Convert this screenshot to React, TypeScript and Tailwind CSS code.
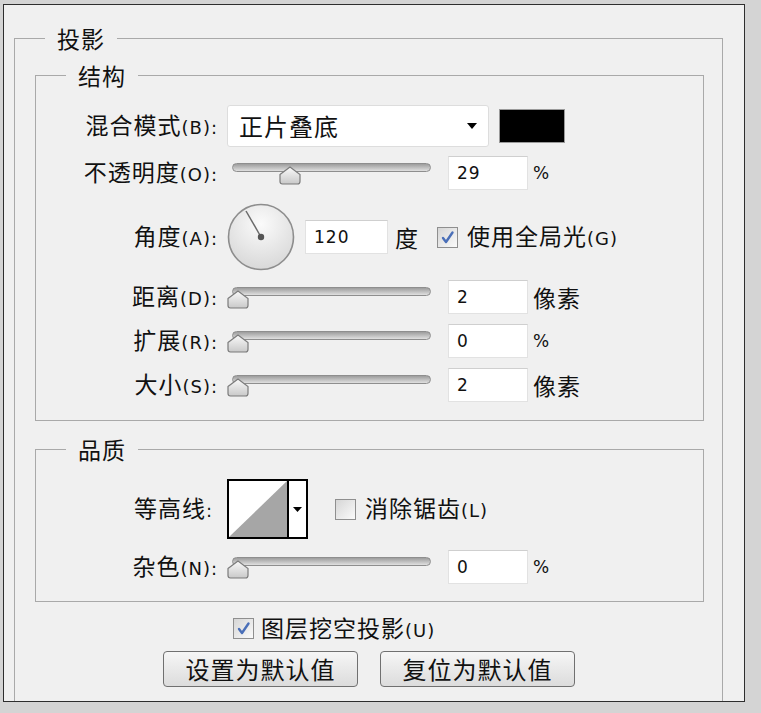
import React from 'react';

const latin = "font-['DejaVu_Sans',sans-serif] text-[18px] tracking-[1px]";
const num = "font-['DejaVu_Sans',sans-serif] text-[17px]";

function Lbl({ zh, key2, w = 'w-[182px]' }: { zh: string; key2?: string; w?: string }) {
  return (
    <div className={`${w} shrink-0 text-right whitespace-nowrap`}>
      {zh}
      {key2 && <span className={latin}>{key2}</span>}
      <span className={latin}>:</span>
    </div>
  );
}

function NumBox({ value, w = 'w-[80px]' }: { value: string; w?: string }) {
  return (
    <div className={`${w} h-[34px] shrink-0 bg-white border border-[#e2e2e2] border-t-[#cfcfcf] flex items-center pl-[8px] ${num}`}>
      {value}
    </div>
  );
}

function Thumb() {
  return (
    <svg width="22" height="19" viewBox="0 0 22 19">
      <defs>
        <linearGradient id="tg" x1="0" y1="0" x2="0" y2="1">
          <stop offset="0" stopColor="#fafafa" />
          <stop offset="1" stopColor="#c9c9c9" />
        </linearGradient>
      </defs>
      <path d="M1 8.5 L11 1 L21 8.5 V15.5 Q21 18 18.5 18 H3.5 Q1 18 1 15.5 Z" fill="url(#tg)" stroke="#7b7b7b" strokeWidth="1.2" />
    </svg>
  );
}

function Slider({ pos }: { pos: number }) {
  return (
    <div className="relative w-[205px] h-[34px] shrink-0">
      <div className="absolute left-[5px] top-[7px] w-[199px] h-[9px] rounded-full border border-[#8e8e8e] bg-linear-to-b from-[#9d9d9d] to-[#e0e0e0]" />
      <div className="absolute top-[10px]" style={{ left: pos }}>
        <Thumb />
      </div>
    </div>
  );
}

function Check({ on }: { on: boolean }) {
  return (
    <div className="w-[21px] h-[21px] shrink-0 border border-[#8f8f8f] bg-linear-to-br from-[#d6d6d6] to-[#fbfbfb] flex items-center justify-center">
      {on && (
        <svg width="15" height="15" viewBox="0 0 15 15">
          <path d="M3 8 L6 12 L12.5 2.5" fill="none" stroke="#4a6fb8" strokeWidth="2.4" strokeLinecap="round" strokeLinejoin="round" />
        </svg>
      )}
    </div>
  );
}

function Dial() {
  return (
    <svg width="68" height="68" viewBox="0 0 68 68" className="shrink-0">
      <defs>
        <radialGradient id="dg" cx="0.5" cy="0.3" r="0.75">
          <stop offset="0" stopColor="#fbfbfb" />
          <stop offset="1" stopColor="#d6d6d6" />
        </radialGradient>
      </defs>
      <circle cx="34" cy="34" r="32.5" fill="url(#dg)" stroke="#8d8d8d" strokeWidth="1.6" />
      <line x1="34" y1="34" x2="19" y2="8" stroke="#6a6a6a" strokeWidth="1.5" />
      <circle cx="34" cy="34" r="3.2" fill="#555" />
    </svg>
  );
}

function Contour() {
  return (
    <div className="w-[81px] h-[60px] shrink-0 border-2 border-black flex bg-white">
      <svg width="58" height="56" viewBox="0 0 58 56">
        <polygon points="0,56 58,0 58,56" fill="#a6a6a6" />
      </svg>
      <div className="flex-1 border-l-2 border-black flex items-center justify-center">
        <svg width="9" height="5" viewBox="0 0 9 5">
          <polygon points="0,0 9,0 4.5,5" fill="#000" />
        </svg>
      </div>
    </div>
  );
}

function Unit({ t, latinText }: { t: string; latinText?: boolean }) {
  return <div className={`ml-[5px] ${latinText ? num : ''}`}>{t}</div>;
}

export default function App() {
  return (
    <div className="w-[761px] h-[713px] bg-[#d4d4d4] pt-[4px] pl-[3px] text-[23px] leading-[24px] tracking-[1px] text-[#111] font-['Noto_Sans_CJK_SC','Noto_Sans',sans-serif] overflow-hidden">
      <div className="w-[742px] h-[698px] border border-[#2e2e2e] bg-[#f0f0f0] flex flex-col pl-[10px] pt-[21px]">
        <fieldset className="w-[709px] flex-1 border border-b-0 border-[#a9a9a9] pt-[13px] pl-[20px] pr-[18px]">
          <legend className="ml-[10px] px-[12px] leading-[24px]">投影</legend>

          <fieldset className="border border-[#a9a9a9] pb-[18px]">
            <legend className="ml-[30px] px-[12px] leading-[24px]">结构</legend>

            <div className="flex items-center h-[42px] mt-[18px]">
              <Lbl zh="混合模式" key2="(B)" />
              <div className="ml-[9px] w-[262px] h-[42px] bg-white border border-[#dddddd] rounded-[3px] flex items-center justify-between pl-[11px] pr-[11px]">
                <span className="text-[24px]">正片叠底</span>
                <svg width="10" height="6" viewBox="0 0 10 6">
                  <polygon points="0,0 10,0 5,6" fill="#000" />
                </svg>
              </div>
              <div className="ml-[10px] w-[66px] h-[34px] bg-black border border-[#9a9a9a]" />
            </div>

            <div className="flex items-center h-[34px] mt-[9px]">
              <Lbl zh="不透明度" key2="(O)" />
              <div className="ml-[9px] flex items-center">
                <Slider pos={52} />
                <div className="ml-[16px]"><NumBox value="29" /></div>
                <Unit t="%" latinText />
              </div>
            </div>

            <div className="flex items-center h-[68px] mt-[13px]">
              <Lbl zh="角度" key2="(A)" />
              <div className="ml-[9px] flex items-center">
                <Dial />
                <div className="ml-[10px]"><NumBox value="120" w="w-[83px]" /></div>
                <div className="ml-[7px]">度</div>
                <div className="ml-[18px]"><Check on /></div>
                <div className="ml-[9px] whitespace-nowrap">
                  使用全局光<span className={latin}>(G)</span>
                </div>
              </div>
            </div>

            {[
              { zh: '距离', k: '(D)', v: '2', u: '像素', mt: 'mt-[9px]' },
              { zh: '扩展', k: '(R)', v: '0', u: '%', mt: 'mt-[10px]' },
              { zh: '大小', k: '(S)', v: '2', u: '像素', mt: 'mt-[10px]' },
            ].map((r) => (
              <div key={r.zh} className={`flex items-center h-[34px] ${r.mt}`}>
                <Lbl zh={r.zh} key2={r.k} />
                <div className="ml-[9px] flex items-center">
                  <Slider pos={0} />
                  <div className="ml-[16px]"><NumBox value={r.v} /></div>
                  <Unit t={r.u} latinText={r.u === '%'} />
                </div>
              </div>
            ))}
          </fieldset>

          <fieldset className="mt-[16px] border border-[#a9a9a9] pb-[17px]">
            <legend className="ml-[30px] px-[12px] leading-[24px]">品质</legend>

            <div className="flex items-center h-[60px] mt-[18px]">
              <Lbl zh="等高线" w="w-[177px]" />
              <div className="ml-[14px] flex items-center">
                <Contour />
                <div className="ml-[27px]"><Check on={false} /></div>
                <div className="ml-[9px] whitespace-nowrap">
                  消除锯齿<span className={latin}>(L)</span>
                </div>
              </div>
            </div>

            <div className="flex items-center h-[34px] mt-[11px]">
              <Lbl zh="杂色" key2="(N)" />
              <div className="ml-[9px] flex items-center">
                <Slider pos={0} />
                <div className="ml-[16px]"><NumBox value="0" /></div>
                <Unit t="%" latinText />
              </div>
            </div>
          </fieldset>

          <div className="flex items-center h-[21px] mt-[16px] pl-[198px]">
            <Check on />
            <div className="ml-[7px] whitespace-nowrap">
              图层挖空投影<span className={latin}>(U)</span>
            </div>
          </div>

          <div className="flex mt-[12px] pl-[128px] gap-[22px]">
            {['设置为默认值', '复位为默认值'].map((b) => (
              <div
                key={b}
                className="w-[195px] h-[36px] rounded-[4px] border border-[#707070] bg-linear-to-b from-[#f6f6f6] to-[#dcdcdc] flex items-center justify-center text-[24px]"
              >
                {b}
              </div>
            ))}
          </div>
        </fieldset>
      </div>
    </div>
  );
}
